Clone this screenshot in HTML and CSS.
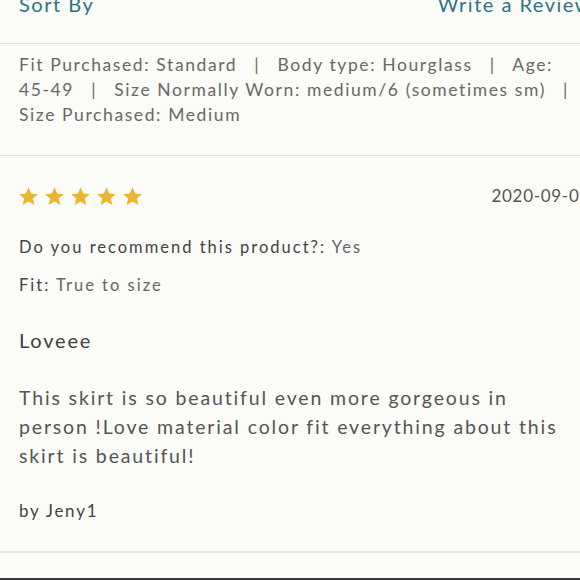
FILE: index.html
```html
<!DOCTYPE html>
<html>
<head>
<meta charset="utf-8">
<link rel="stylesheet" href="styles.css">
</head>
<body>
<div class="page">
  <div class="toolbar">
    <span class="link">Sort By</span>
    <span class="link">Write a Review</span>
  </div>
  <div class="meta">
    Fit Purchased: Standard <span class="sep">|</span> Body type: Hourglass <span class="sep">|</span> Age: <span class="nw">45-49</span> <span class="sep">|</span> Size Normally Worn: medium/6 (sometimes sm) <span class="sep">|</span> Size Purchased: Medium
  </div>
  <div class="review">
    <div class="review-head">
      <div class="stars">
        <svg viewBox="0 0 24 24"><path d="M12 1.5l3.1 7.2 7.6.6-5.8 5 1.8 7.5L12 17.8l-6.7 4 1.8-7.5-5.8-5 7.6-.6z"/></svg>
        <svg viewBox="0 0 24 24"><path d="M12 1.5l3.1 7.2 7.6.6-5.8 5 1.8 7.5L12 17.8l-6.7 4 1.8-7.5-5.8-5 7.6-.6z"/></svg>
        <svg viewBox="0 0 24 24"><path d="M12 1.5l3.1 7.2 7.6.6-5.8 5 1.8 7.5L12 17.8l-6.7 4 1.8-7.5-5.8-5 7.6-.6z"/></svg>
        <svg viewBox="0 0 24 24"><path d="M12 1.5l3.1 7.2 7.6.6-5.8 5 1.8 7.5L12 17.8l-6.7 4 1.8-7.5-5.8-5 7.6-.6z"/></svg>
        <svg viewBox="0 0 24 24"><path d="M12 1.5l3.1 7.2 7.6.6-5.8 5 1.8 7.5L12 17.8l-6.7 4 1.8-7.5-5.8-5 7.6-.6z"/></svg>
      </div>
      <span class="date">2020-09-03</span>
    </div>
    <p class="qa"><span class="label">Do you recommend this product?:</span> Yes</p>
    <p class="qa fit"><span class="label">Fit:</span> True to size</p>
    <h3 class="title">Loveee</h3>
    <p class="body">This skirt is so beautiful even more gorgeous in person !Love material color fit everything about this skirt is beautiful!</p>
    <p class="author">by Jeny1</p>
  </div>
  <div class="bottom"></div>
</div>
</body>
</html>
```
FILE: styles.css
```css
html, body {
  margin: 0;
  padding: 0;
  background: #fbfbf7;
  overflow: hidden;
  height: 580px;
}
.page {
  width: 608px;
  font-family: Lato, "Open Sans", sans-serif;
  color: #555;
  height: 580px;
  display: flex;
  flex-direction: column;
}
.toolbar {
  display: flex;
  justify-content: space-between;
  align-items: flex-start;
  padding: 0 16px 0 19px;
  height: 43px;
  border-bottom: 1px solid #e0e0dc;
  flex: none;
}
.link {
  color: #2d7285;
  font-size: 20px;
  letter-spacing: 1.5px;
  line-height: 24px;
  margin-top: -8px;
}
.meta {
  padding: 8px 18px 28px 19px;
  font-size: 17.5px;
  line-height: 25px;
  color: #686868;
  letter-spacing: 1.6px;
  border-bottom: 1px solid #e0e0dc;
  flex: none;
}
.nw {
  white-space: nowrap;
}
.sep {
  margin: 0 11px;
}
.review {
  padding: 28px 18px 0 19px;
  border-bottom: 2px solid #e4e4e0;
  height: 397px;
  box-sizing: border-box;
  flex: none;
}
.review-head {
  display: flex;
  justify-content: space-between;
  align-items: center;
  height: 24px;
}
.stars {
  display: flex;
  gap: 5px;
  margin-left: -1px;
}
.stars svg {
  width: 21px;
  height: 21px;
  fill: #ebb532;
}
.date {
  font-size: 17px;
  color: #555;
  letter-spacing: 0.7px;
  line-height: 24px;
}
.qa {
  margin: 27px 0 0;
  font-size: 16.5px;
  letter-spacing: 2px;
  color: #666;
  line-height: 24px;
}
.qa.fit {
  margin-top: 14px;
}
.label {
  color: #444;
}
.title {
  margin: 30px 0 0;
  font-weight: normal;
  font-size: 20px;
  letter-spacing: 1.8px;
  color: #3f3f3f;
  line-height: 26px;
}
.body {
  margin: 30px 0 0;
  max-width: 553px;
  font-size: 19.5px;
  line-height: 29px;
  letter-spacing: 1.85px;
  color: #555;
}
.author {
  margin: 29px 0 0;
  font-size: 17px;
  line-height: 24px;
  letter-spacing: 1.75px;
  color: #444;
}
.bottom {
  margin-top: auto;
  height: 2px;
  background: #3a3a3a;
  flex: none;
}
```
